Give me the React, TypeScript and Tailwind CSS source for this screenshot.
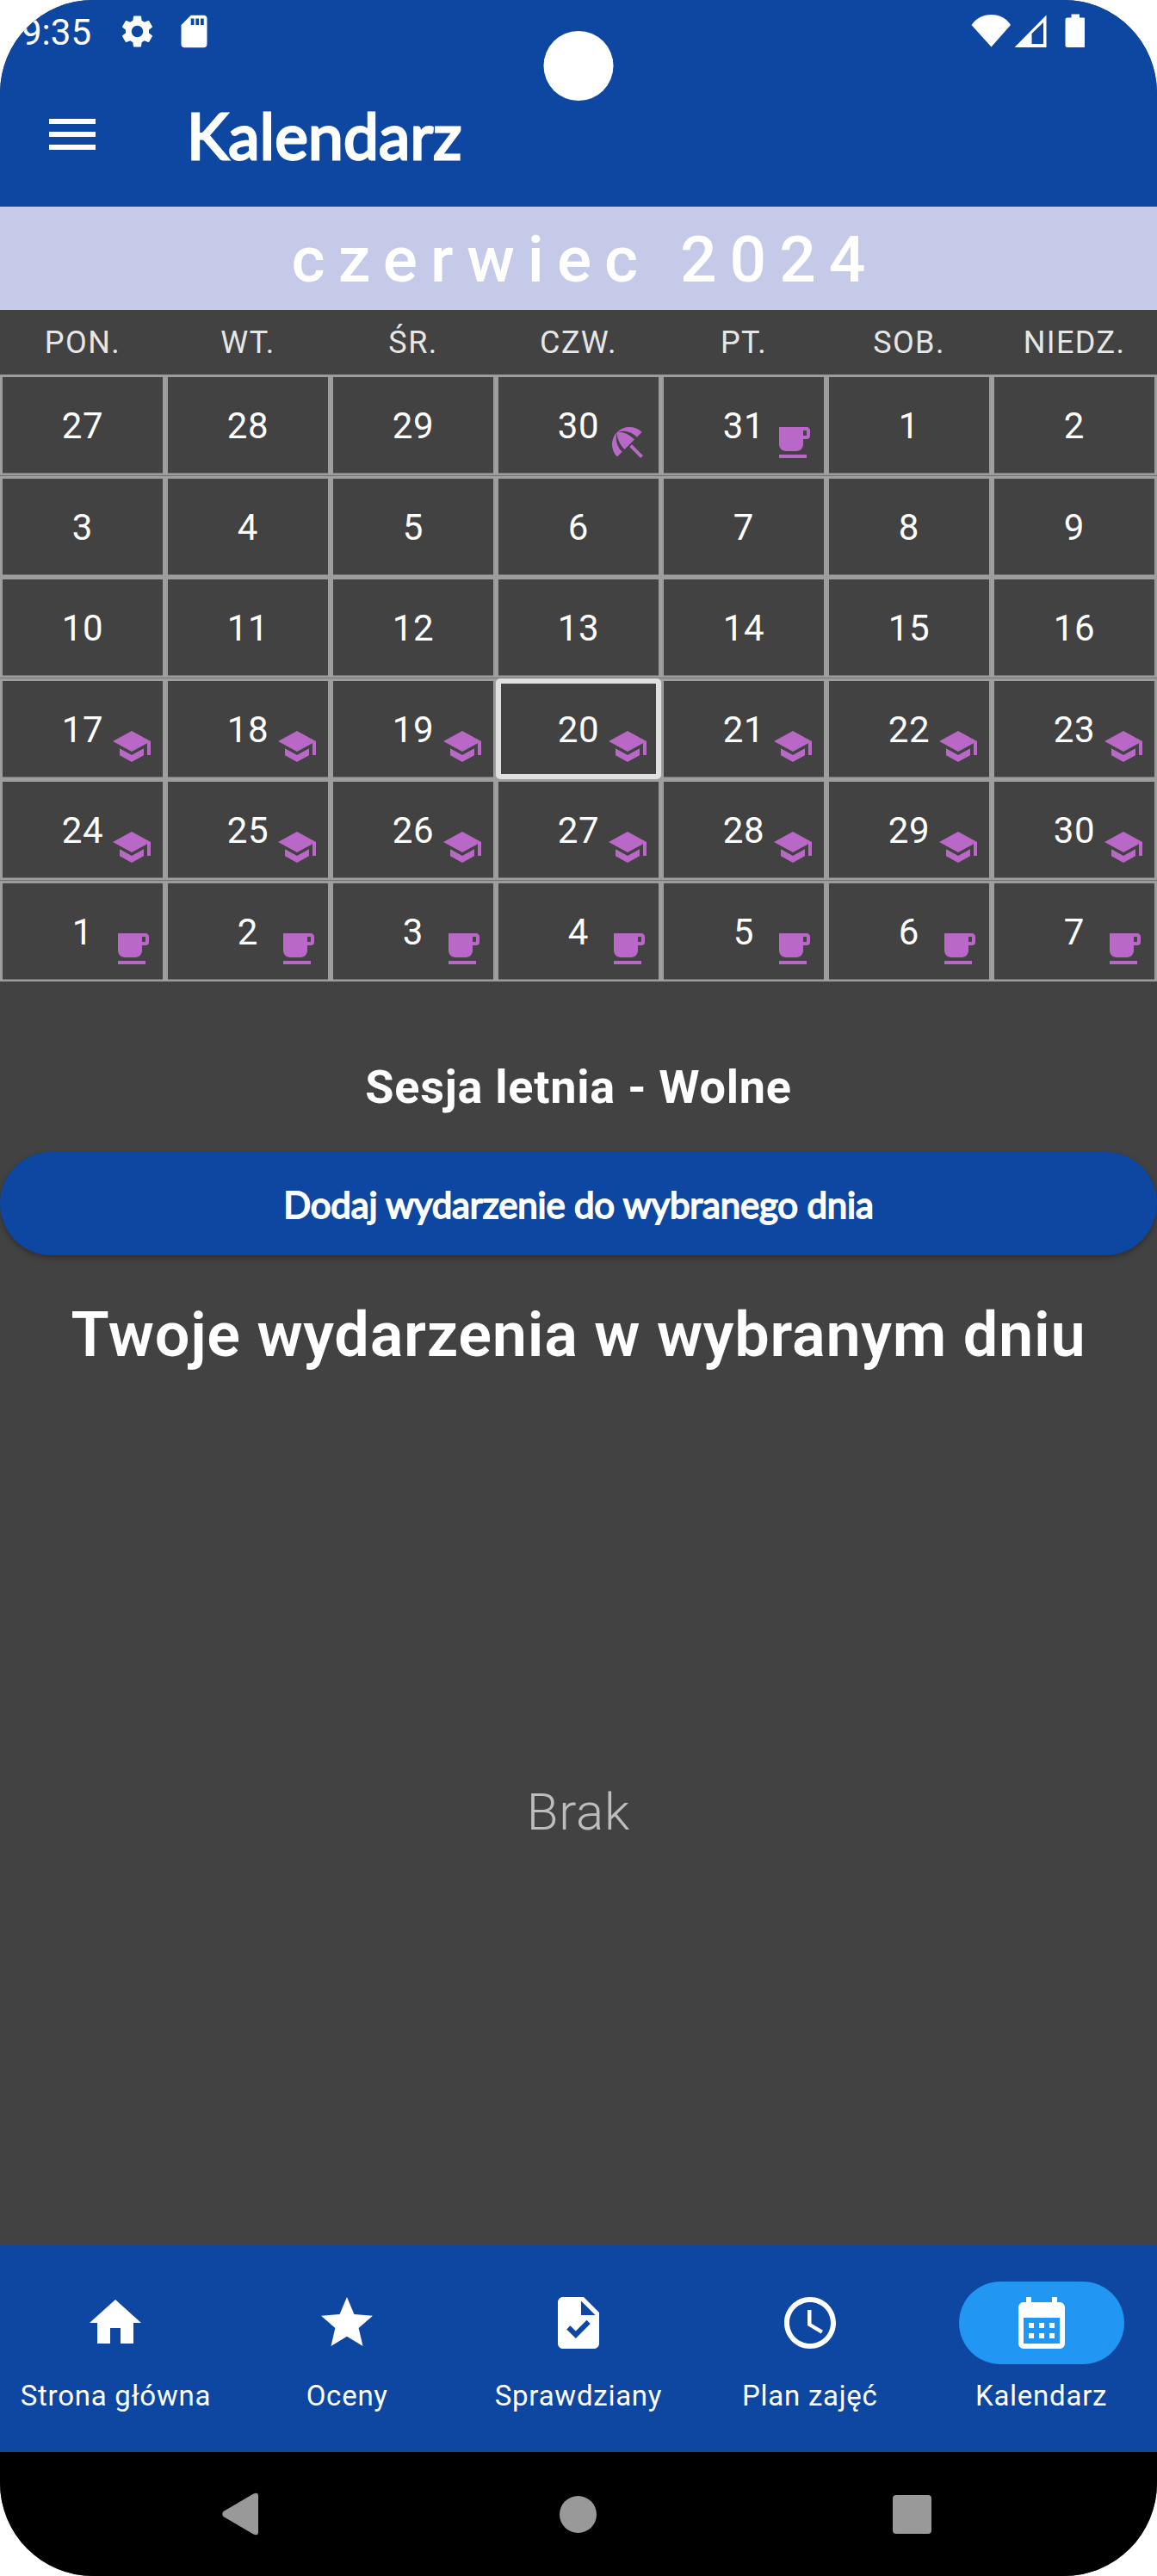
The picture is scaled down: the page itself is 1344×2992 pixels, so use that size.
import { MdSettings, MdSdCard, MdMenu, MdBeachAccess, MdFreeBreakfast, MdSchool, MdHome, MdStar, MdTask, MdAccessTime, MdCalendarMonth } from "react-icons/md";
import type { IconType } from "react-icons";

const weekdays = ["PON.", "WT.", "ŚR.", "CZW.", "PT.", "SOB.", "NIEDZ."];

type Day = { day: number; icon?: IconType; selected?: boolean };

const range = (from: number, icon?: IconType): Day[] =>
  Array.from({ length: 7 }, (_, i) => ({ day: from + i, icon }));

const weeks: Day[][] = [
  [{ day: 27 }, { day: 28 }, { day: 29 }, { day: 30, icon: MdBeachAccess }, { day: 31, icon: MdFreeBreakfast }, { day: 1 }, { day: 2 }],
  range(3),
  range(10),
  range(17, MdSchool).map((d) => ({ ...d, selected: d.day === 20 })),
  range(24, MdSchool),
  range(1, MdFreeBreakfast),
];

const tabs: { label: string; icon: IconType; active?: boolean }[] = [
  { label: "Strona główna", icon: MdHome },
  { label: "Oceny", icon: MdStar },
  { label: "Sprawdziany", icon: MdTask },
  { label: "Plan zajęć", icon: MdAccessTime },
  { label: "Kalendarz", icon: MdCalendarMonth, active: true },
];

const tallCell =
  "h-[118px] shadow-[inset_0_-1px_0_#707070,inset_3px_3px_0_#9e9e9e,inset_-3px_-3px_0_#9e9e9e,inset_0_-4px_0_#707070]";
const shortCell =
  "h-[117px] shadow-[inset_3px_3px_0_#9e9e9e,inset_-3px_0_0_#9e9e9e,inset_0_-2px_0_#9e9e9e,inset_0_-3px_0_#707070]";

function DayCell({ day, icon: Icon, selected, tall }: Day & { tall: boolean }) {
  return (
    <div className={`relative flex justify-center pt-[35px] ${tall ? tallCell : shortCell}`}>
      {selected && (
        <div className="absolute inset-0 bg-[#9e9e9e]">
          <div className="h-full rounded-[5px] border-6 border-[#e0e0e0] bg-[#424242]" />
        </div>
      )}
      <span className="relative h-[50px] text-[42px] leading-[50px] tracking-[0.75px] text-white">{day}</span>
      {Icon && <Icon className="absolute top-[55px] right-[15px] size-12 text-[#ba68c8]" />}
    </div>
  );
}

function StatusBar() {
  return (
    <div className="flex h-[72px] items-center justify-between pr-[84px] pl-[25px] text-white">
      <div className="flex items-center">
        <span className="w-[112px] pt-[4px] text-[42px] leading-[50px]">9:35</span>
        <MdSettings className="size-[45px]" />
        <MdSdCard className="ml-[21px] size-[45px]" />
      </div>
      <svg className="h-[40px] w-[132px]" viewBox="0 0 132 40" fill="currentColor">
        <path d="M0.5 13C6 5 14 1 23.5 1S41 5 46 13L23.5 38.5Z" />
        <path fillRule="evenodd" d="M50.500 39L87.500 1.500V39ZM70.500 23V35H84V10Z" />
        <path d="M116.500 0.500h9.500v4h4.500q2.500 0 2.500 2.500v29.500q0 2.500-2.500 2.500h-18.500q-2.500 0-2.500-2.500V7q0-2.500 2.500-2.500h4.500z" />
      </svg>
    </div>
  );
}

export default function App() {
  return (
    <div className="h-[2992px] w-[1344px] bg-white">
      <div className="relative flex h-full flex-col overflow-hidden rounded-[108px] bg-[#424242] font-['Roboto',sans-serif]">
        <div className="absolute top-[36px] left-1/2 size-[81px] -translate-x-1/2 rounded-full bg-white" />
        <header className="h-[240px] bg-[#0d47a1]">
          <StatusBar />
          <div className="flex h-[168px] items-center pl-12 text-white">
            <MdMenu className="size-[72px]" />
            <h1 className="ml-[97px] pt-[2px] font-['Lato',sans-serif] text-[73px] leading-[90px] tracking-[0.2px] [-webkit-text-stroke:2.800px_white]">
              Kalendarz
            </h1>
          </div>
        </header>

        <div className="flex h-[120px] items-center justify-center bg-[#c5cae9] pt-[2px] pl-[15px] text-[75px] font-medium tracking-[15px] text-white">
          czerwiec 2024
        </div>
        <div className="grid h-[75px] grid-cols-7 items-center pt-[1px] text-center text-[36px] tracking-[1.4px] text-[#e6e6e6]">
          {weekdays.map((d) => (
            <span key={d}>{d}</span>
          ))}
        </div>
        <div className="flex flex-col">
          {weeks.map((week, row) => (
            <div key={row} className="grid grid-cols-7">
              {week.map((d) => (
                <DayCell key={d.day} {...d} tall={row % 2 === 0} />
              ))}
            </div>
          ))}
        </div>

        <main className="flex flex-1 flex-col text-center text-white">
          <h2 className="mt-[91px] h-[63px] text-[54px] leading-[63px] font-bold tracking-[0.75px]">Sesja letnia - Wolne</h2>
          <button className="mt-[44px] h-[120px] rounded-full bg-[#0d47a1] pt-[2px] font-['Lato',sans-serif] text-[42px] tracking-[-0.18px] shadow-[0_3px_6px_rgba(0,0,0,0.3)] [-webkit-text-stroke:1.800px_white]">
            Dodaj wydarzenie do wybranego dnia
          </button>
          <h2 className="mt-[50px] h-[85px] text-[72px] leading-[85px] font-semibold tracking-[0.75px]">
            Twoje wydarzenia w wybranym dniu
          </h2>
          <p className="mt-[476px] text-[60px] leading-[71px] font-light tracking-[0.75px] text-[#bdbdbd]">Brak</p>
        </main>

        <nav className="grid h-[240px] grid-cols-5 bg-[#0d47a1] text-white">
          {tabs.map(({ label, icon: Icon, active }) => (
            <div key={label} className="flex flex-col items-center pt-[42px]">
              <div className={`flex h-24 w-48 items-center justify-center rounded-full ${active ? "bg-[#2196f3]" : ""}`}>
                <Icon className="size-[72px]" />
              </div>
              <span className="mt-[15px] text-[33px] leading-[43px] whitespace-nowrap tracking-[0.75px]">{label}</span>
            </div>
          ))}
        </nav>
        <div className="flex h-[144px] items-center bg-black pl-[258px] text-[#999999]">
          <svg className="h-[50px] w-[42px]" viewBox="0 0 42 50" fill="currentColor">
            <path d="M36.500 1.500Q42 -1 42 4V46Q42 51 36.500 48.500L1.500 28Q-1 25 1.500 22Z" />
          </svg>
          <div className="ml-[350px] size-[43px] rounded-full bg-current" />
          <div className="ml-[344px] size-[45px] rounded-[4px] bg-current" />
        </div>
      </div>
    </div>
  );
}
